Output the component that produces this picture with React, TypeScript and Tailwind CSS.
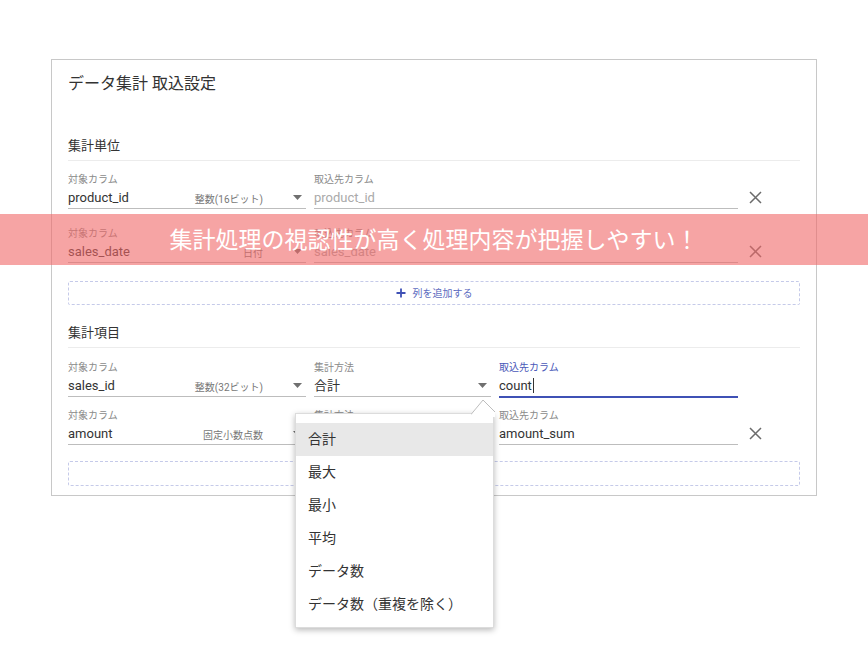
import React from "react";

const FONT = { fontFamily: 'Roboto, "Noto Sans CJK JP", sans-serif' };

function Arrow() {
  return (
    <svg width="9" height="5" viewBox="0 0 9 5" className="shrink-0">
      <polygon points="0,0 9,0 4.5,5" fill="#707070" />
    </svg>
  );
}

function XIcon() {
  return (
    <svg width="13" height="13" viewBox="0 0 13 13">
      <path d="M1 1 L12 12 M12 1 L1 12" stroke="#6b6b6b" strokeWidth="1.5" fill="none" />
    </svg>
  );
}

function Label({ children, blue }: { children: React.ReactNode; blue?: boolean }) {
  return (
    <div className={`h-[14px] text-[10px] leading-[14px] ${blue ? "text-[#4a58b8]" : "text-[#8a8a8a]"}`}>
      {children}
    </div>
  );
}

function SourceField({ value, type }: { value: string; type: string }) {
  return (
    <div className="w-[238px] shrink-0 border-b border-[#bdbdbd]">
      <Label>対象カラム</Label>
      <div className="h-[21px] flex items-center">
        <div className="flex-1 text-[13px] text-[#333]">{value}</div>
        <div className="text-[10px] text-[#777] pt-[3px]">{type}</div>
        <div className="w-[30px] shrink-0" />
        <Arrow />
        <div className="w-[4px] shrink-0" />
      </div>
    </div>
  );
}

function TextField({
  label,
  value,
  placeholder,
  className,
  focused,
}: {
  label: string;
  value?: string;
  placeholder?: string;
  className: string;
  focused?: boolean;
}) {
  return (
    <div className={`${className} ${focused ? "border-b-2 border-[#3f51b5] mb-[-1px]" : "border-b border-[#bdbdbd]"}`}>
      <Label blue={focused}>{label}</Label>
      <div className="h-[21px] flex items-center text-[13px]">
        {value ? (
          <span className="text-[#333]">{value}</span>
        ) : (
          <span className="text-[#aaa]">{placeholder}</span>
        )}
        {focused && <span className="inline-block w-px h-[15px] bg-[#333] ml-px" />}
      </div>
    </div>
  );
}

function SelectField({ value, className }: { value: string; className: string }) {
  return (
    <div className={`${className} border-b border-[#bdbdbd]`}>
      <Label>集計方法</Label>
      <div className="h-[21px] flex items-center">
        <div className="flex-1 text-[13px] text-[#333]">{value}</div>
        <Arrow />
        <div className="w-[4px] shrink-0" />
      </div>
    </div>
  );
}

function XCol({ show = true }: { show?: boolean }) {
  return (
    <div className="w-[62px] shrink-0 h-[24px] flex items-center pl-[11px]">
      {show && <XIcon />}
    </div>
  );
}

function AddButton({ h, label = true }: { h: string; label?: boolean }) {
  return (
    <div className={`${h} border border-dashed border-[#c5cae9] rounded-[2px] flex items-center justify-center gap-[7px] text-[10px] text-[#5c6bc0]`}>
      {label && (
        <>
          <svg width="10" height="10" viewBox="0 0 10 10">
            <path d="M5 0.5 V9.5 M0.5 5 H9.5" stroke="#3f51b5" strokeWidth="1.8" />
          </svg>
          <span>列を追加する</span>
        </>
      )}
    </div>
  );
}

const menuItems = ["合計", "最大", "最小", "平均", "データ数", "データ数（重複を除く）"];

export default function App() {
  return (
    <div className="relative w-[868px] h-[668px] bg-white overflow-hidden pt-[59px] pl-[51px]" style={FONT}>
      <div className="relative w-[766px] border border-[#c8c8c8] px-4 pt-3 pb-[9px]">
        <div className="text-[16px] leading-6 text-[#333]">データ集計 取込設定</div>

        <div className="mt-[40px] text-[13px] leading-5 pb-1 border-b border-[#ececec] text-[#333]">集計単位</div>

        <div className="mt-3 flex items-end">
          <SourceField value="product_id" type="整数(16ビット)" />
          <div className="w-2 shrink-0" />
          <TextField className="flex-1" label="取込先カラム" placeholder="product_id" />
          <XCol />
        </div>

        <div className="mt-[18px] flex items-end">
          <SourceField value="sales_date" type="日付" />
          <div className="w-2 shrink-0" />
          <TextField className="flex-1" label="取込先カラム" placeholder="sales_date" />
          <XCol />
        </div>

        <div className="mt-[18px]">
          <AddButton h="h-[24px]" />
        </div>

        <div className="mt-[18px] text-[13px] leading-5 pb-1 border-b border-[#ececec] text-[#333]">集計項目</div>

        <div className="mt-[13px] flex items-end">
          <SourceField value="sales_id" type="整数(32ビット)" />
          <div className="w-2 shrink-0" />
          <SelectField className="w-[177px] shrink-0" value="合計" />
          <div className="w-2 shrink-0" />
          <TextField className="w-[239px] shrink-0" label="取込先カラム" value="count" focused />
          <XCol show={false} />
        </div>

        <div className="mt-3 flex items-end">
          <SourceField value="amount" type="固定小数点数" />
          <div className="w-2 shrink-0" />
          <SelectField className="w-[177px] shrink-0" value="合計" />
          <div className="w-2 shrink-0" />
          <TextField className="w-[239px] shrink-0" label="取込先カラム" value="amount_sum" />
          <XCol />
        </div>

        <div className="mt-4">
          <AddButton h="h-[25px]" />
        </div>

        {/* dropdown menu */}
        <div className="absolute left-[243px] top-[353px] w-[199px] bg-white border border-[#dcdcdc] shadow-[0_2px_6px_rgba(0,0,0,0.28)] pt-[9px] pb-[6px]">
          <svg className="absolute left-[175px] top-[-15px]" width="25" height="18" viewBox="0 0 25 18">
            <polygon points="0,15.5 12,1 24,13 24,18 0,18" fill="#ffffff" />
            <polyline points="0,15.5 12,1 24,13" fill="none" stroke="#bdbdbd" strokeWidth="1" />
          </svg>
          {menuItems.map((m, i) => (
            <div
              key={m}
              className={`h-[33px] flex items-center pl-3 text-[14px] text-[#333] ${i === 0 ? "bg-[#e8e8e8]" : ""}`}
            >
              {m}
            </div>
          ))}
        </div>
      </div>

      {/* banner */}
      <div className="absolute left-0 top-[214px] w-full h-[51px] bg-[rgba(240,103,103,0.6)] flex items-center justify-center pt-[4px] text-white text-[23px] font-normal">
        集計処理の視認性が高く処理内容が把握しやすい！
      </div>
    </div>
  );
}
